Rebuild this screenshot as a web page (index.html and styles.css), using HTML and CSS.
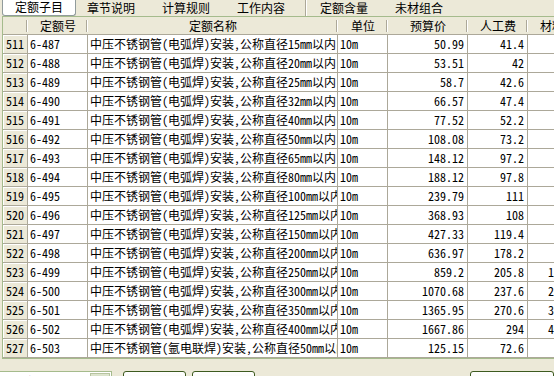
FILE: index.html
```html
<!DOCTYPE html>
<html lang="zh-CN">
  <head>
    <meta charset="UTF-8" />
    <title>定额子目</title>
    <link rel="stylesheet" href="styles.css">
  </head>
  <body>
    <div class="tabs">
      <div class="tab active">定额子目</div>
      <div class="tab">章节说明</div>
      <div class="tab">计算规则</div>
      <div class="tab">工作内容</div>
      <div class="tab-sep"></div>
      <div class="tab">定额含量</div>
      <div class="tab">未材组合</div>
    </div>

    <div class="grid">
      <div class="hd"></div>
      <div class="hd">定额号</div>
      <div class="hd">定额名称</div>
      <div class="hd">单位</div>
      <div class="hd">预算价</div>
      <div class="hd">人工费</div>
      <div class="hd">材料费</div>
      <div class="hd">机械费</div>

      <div class="no">511</div><div class="c">6-487</div><div class="c">中压不锈钢管(电弧焊)安装,公称直径15mm以内</div><div class="c">10m</div><div class="c num">50.99</div><div class="c num">41.4</div><div class="c num">2.35</div><div class="c num">7.24</div>
      <div class="no">512</div><div class="c">6-488</div><div class="c">中压不锈钢管(电弧焊)安装,公称直径20mm以内</div><div class="c">10m</div><div class="c num">53.51</div><div class="c num">42</div><div class="c num">2.77</div><div class="c num">8.74</div>
      <div class="no">513</div><div class="c">6-489</div><div class="c">中压不锈钢管(电弧焊)安装,公称直径25mm以内</div><div class="c">10m</div><div class="c num">58.7</div><div class="c num">42.6</div><div class="c num">3.44</div><div class="c num">12.66</div>
      <div class="no">514</div><div class="c">6-490</div><div class="c">中压不锈钢管(电弧焊)安装,公称直径32mm以内</div><div class="c">10m</div><div class="c num">66.57</div><div class="c num">47.4</div><div class="c num">4.16</div><div class="c num">15.01</div>
      <div class="no">515</div><div class="c">6-491</div><div class="c">中压不锈钢管(电弧焊)安装,公称直径40mm以内</div><div class="c">10m</div><div class="c num">77.52</div><div class="c num">52.2</div><div class="c num">5.08</div><div class="c num">20.24</div>
      <div class="no">516</div><div class="c">6-492</div><div class="c">中压不锈钢管(电弧焊)安装,公称直径50mm以内</div><div class="c">10m</div><div class="c num">108.08</div><div class="c num">73.2</div><div class="c num">6.41</div><div class="c num">28.47</div>
      <div class="no">517</div><div class="c">6-493</div><div class="c">中压不锈钢管(电弧焊)安装,公称直径65mm以内</div><div class="c">10m</div><div class="c num">148.12</div><div class="c num">97.2</div><div class="c num">9.89</div><div class="c num">41.03</div>
      <div class="no">518</div><div class="c">6-494</div><div class="c">中压不锈钢管(电弧焊)安装,公称直径80mm以内</div><div class="c">10m</div><div class="c num">188.12</div><div class="c num">97.8</div><div class="c num">12.5</div><div class="c num">77.82</div>
      <div class="no">519</div><div class="c">6-495</div><div class="c">中压不锈钢管(电弧焊)安装,公称直径100mm以内</div><div class="c">10m</div><div class="c num">239.79</div><div class="c num">111</div><div class="c num">16.96</div><div class="c num">111.83</div>
      <div class="no">520</div><div class="c">6-496</div><div class="c">中压不锈钢管(电弧焊)安装,公称直径125mm以内</div><div class="c">10m</div><div class="c num">368.93</div><div class="c num">108</div><div class="c num">50.11</div><div class="c num">210.82</div>
      <div class="no">521</div><div class="c">6-497</div><div class="c">中压不锈钢管(电弧焊)安装,公称直径150mm以内</div><div class="c">10m</div><div class="c num">427.33</div><div class="c num">119.4</div><div class="c num">62.72</div><div class="c num">245.21</div>
      <div class="no">522</div><div class="c">6-498</div><div class="c">中压不锈钢管(电弧焊)安装,公称直径200mm以内</div><div class="c">10m</div><div class="c num">636.97</div><div class="c num">178.2</div><div class="c num">92.51</div><div class="c num">366.26</div>
      <div class="no">523</div><div class="c">6-499</div><div class="c">中压不锈钢管(电弧焊)安装,公称直径250mm以内</div><div class="c">10m</div><div class="c num">859.2</div><div class="c num">205.8</div><div class="c num">128.06</div><div class="c num">525.34</div>
      <div class="no">524</div><div class="c">6-500</div><div class="c">中压不锈钢管(电弧焊)安装,公称直径300mm以内</div><div class="c">10m</div><div class="c num">1070.68</div><div class="c num">237.6</div><div class="c num">201.37</div><div class="c num">631.71</div>
      <div class="no">525</div><div class="c">6-501</div><div class="c">中压不锈钢管(电弧焊)安装,公称直径350mm以内</div><div class="c">10m</div><div class="c num">1365.95</div><div class="c num">270.6</div><div class="c num">306.12</div><div class="c num">789.23</div>
      <div class="no">526</div><div class="c">6-502</div><div class="c">中压不锈钢管(电弧焊)安装,公称直径400mm以内</div><div class="c">10m</div><div class="c num">1667.86</div><div class="c num">294</div><div class="c num">412.58</div><div class="c num">961.28</div>
      <div class="no">527</div><div class="c">6-503</div><div class="c">中压不锈钢管(氩电联焊)安装,公称直径50mm以内</div><div class="c">10m</div><div class="c num">125.15</div><div class="c num">72.6</div><div class="c num">7.02</div><div class="c num">45.53</div>
    </div>

    <div class="footer">
      <div class="combo">
        <span class="combo-text">工程消耗量定额 (2013)</span>
        <span class="combo-btn"></span>
      </div>
      <button class="btn first">边框调整</button>
      <button class="btn">定额数据</button>
      <button class="btn last">添加材料</button>
    </div>
  </body>
</html>
```

FILE: styles.css
```css
body {
  margin: 0;
  width: 554px;
  height: 376px;
  overflow: hidden;
  background-color: #ece9d8;
  font-family: "Noto Sans Mono CJK SC", "Noto Sans CJK SC", monospace;
  font-size: 12px;
  color: #000;
}
.tabs {
  display: flex;
  height: 16px;
  white-space: nowrap;
}
.tab {
  box-sizing: border-box;
  width: 75px;
  padding-right: 5px;
  text-align: center;
  line-height: 15px;
}
.tab.active {
  width: 74px;
  margin-left: 2px;
  padding-right: 0;
  background: #ffffff;
  border: 1px solid #919b9c;
  border-top: none;
  border-radius: 0 0 3px 3px;
  line-height: 14px;
}
.tab-sep {
  width: 1px;
  height: 16px;
  margin: 0 3px 0 4px;
  background: #aca899;
  box-shadow: 1px 0 0 #ffffff;
}
.grid {
  display: grid;
  grid-template-columns: 25px 60px 250px 50px 80px 60px 60px 60px;
  grid-template-rows: 18px;
  grid-auto-rows: 19px;
  width: 700px;
  margin-left: 2px;
  border: 1px solid #a5bb8c;
  border-right: none;
}
.hd {
  box-sizing: border-box;
  text-align: center;
  line-height: 17px;
  white-space: nowrap;
  overflow: hidden;
  border-bottom: 1px solid #aca899;
  background:
    linear-gradient(#aca899, #aca899) right 1px center / 1px 12px no-repeat,
    linear-gradient(#ffffff, #ffffff) right 0 center / 1px 12px no-repeat,
    #ece9d8;
}
.no,
.c {
  box-sizing: border-box;
  border-right: 1px solid #aca899;
  border-bottom: 1px solid #aca899;
  line-height: 18px;
  white-space: nowrap;
  overflow: hidden;
}
.no {
  background: #ece9d8;
  text-align: center;
  box-shadow: inset 1px 1px 0 #ffffff;
}
.c {
  background: #ffffff;
  padding: 0 2px;
}
.num {
  text-align: right;
  padding-right: 3px;
}
.footer {
  display: flex;
  align-items: flex-start;
  margin-top: 12px;
}
.combo {
  box-sizing: border-box;
  display: flex;
  width: 178px;
  height: 21px;
  margin-left: -41px;
  padding: 1px;
  background: #ffffff;
  border: 1px solid #a5bb8c;
}
.combo-text {
  flex: 1;
  padding-left: 3px;
  line-height: 18px;
  white-space: nowrap;
  overflow: hidden;
}
.combo-btn {
  width: 18px;
  height: 17px;
  background: linear-gradient(#dfe6cf, #b4c29b);
  border: 1px solid #b7c4a0;
}
.btn {
  box-sizing: border-box;
  width: 74px;
  height: 23px;
  margin-left: 6px;
  padding: 0;
  font-family: inherit;
  font-size: 12px;
  color: #000;
  background: linear-gradient(#ffffff, #f3f3ee 60%, #e2e2d9);
  border: 1px solid #3d5a1f;
  border-radius: 3px;
}
.btn.first {
  margin-left: 11px;
  width: 73px;
}
.btn.last {
  margin-left: 215px;
  width: 84px;
  flex-shrink: 0;
}
```
